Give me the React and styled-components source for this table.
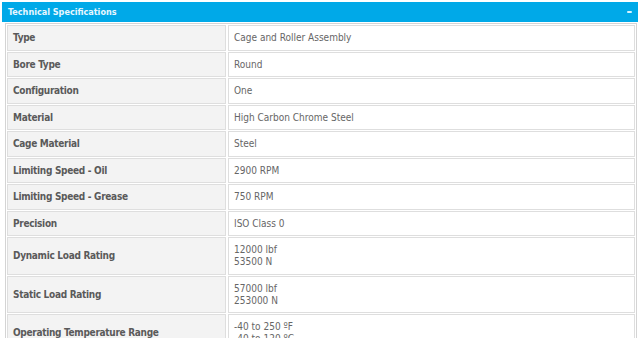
import React from "react";
import styled, { createGlobalStyle } from "styled-components";

const Global = createGlobalStyle`
  html, body { margin: 0; padding: 0; background: #ffffff; }
  body { font-family: "DejaVu Sans Condensed", "DejaVu Sans", "Liberation Sans", sans-serif; font-stretch: condensed; }
`;

const Page = styled.div`
  width: 640px;
  padding: 2px 2px 0 2px;
  box-sizing: border-box;
`;

const Header = styled.div`
  display: flex;
  align-items: center;
  justify-content: space-between;
  height: 20px;
  padding: 0 6px 0 6px;
  background: #00a9e8;
  color: #e8f7ff;
  font-size: 9px;
  font-weight: bold;
`;

const Collapse = styled.span`
  display: block;
  width: 5px;
  height: 2px;
  background: #d8f3ff;
  border-radius: 1px;
`;

const Panel = styled.div`
  margin: 1px 1px 0 3px;
  border: 1px solid #d4d4d4;
  border-bottom: none;
  padding: 1px 1px 0 1px;
  display: grid;
  grid-template-columns: 219px 1fr;
  column-gap: 2px;
  row-gap: 1px;
`;

const Cell = styled.div`
  display: flex;
  flex-direction: column;
  justify-content: center;
  padding: 6px 5px 5.5px 5px;
  line-height: 12px;
  font-size: 10px;
  letter-spacing: ${(p) => (p.$label ? "-0.3px" : "0")};
  color: ${(p) => (p.$label ? "#5a5a5a" : "#666666")};
  font-weight: ${(p) => (p.$label ? "bold" : "normal")};
  background: ${(p) => (p.$label ? "#f3f3f3" : "#ffffff")};
  border: 1px solid #dedede;
`;

const rows = [
  ["Type", ["Cage and Roller Assembly"]],
  ["Bore Type", ["Round"]],
  ["Configuration", ["One"]],
  ["Material", ["High Carbon Chrome Steel"]],
  ["Cage Material", ["Steel"]],
  ["Limiting Speed - Oil", ["2900 RPM"]],
  ["Limiting Speed - Grease", ["750 RPM"]],
  ["Precision", ["ISO Class 0"]],
  ["Dynamic Load Rating", ["12000 lbf", "53500 N"]],
  ["Static Load Rating", ["57000 lbf", "253000 N"]],
  ["Operating Temperature Range", ["-40 to 250 ºF", "-40 to 120 ºC"]],
];

export default function App() {
  return (
    <Page>
      <Global />
      <Header>
        <span>Technical Specifications</span>
        <Collapse />
      </Header>
      <Panel>
        {rows.map(([label, values]) => (
          <React.Fragment key={label}>
            <Cell $label>{label}</Cell>
            <Cell>
              {values.map((v) => (
                <span key={v}>{v}</span>
              ))}
            </Cell>
          </React.Fragment>
        ))}
      </Panel>
    </Page>
  );
}
